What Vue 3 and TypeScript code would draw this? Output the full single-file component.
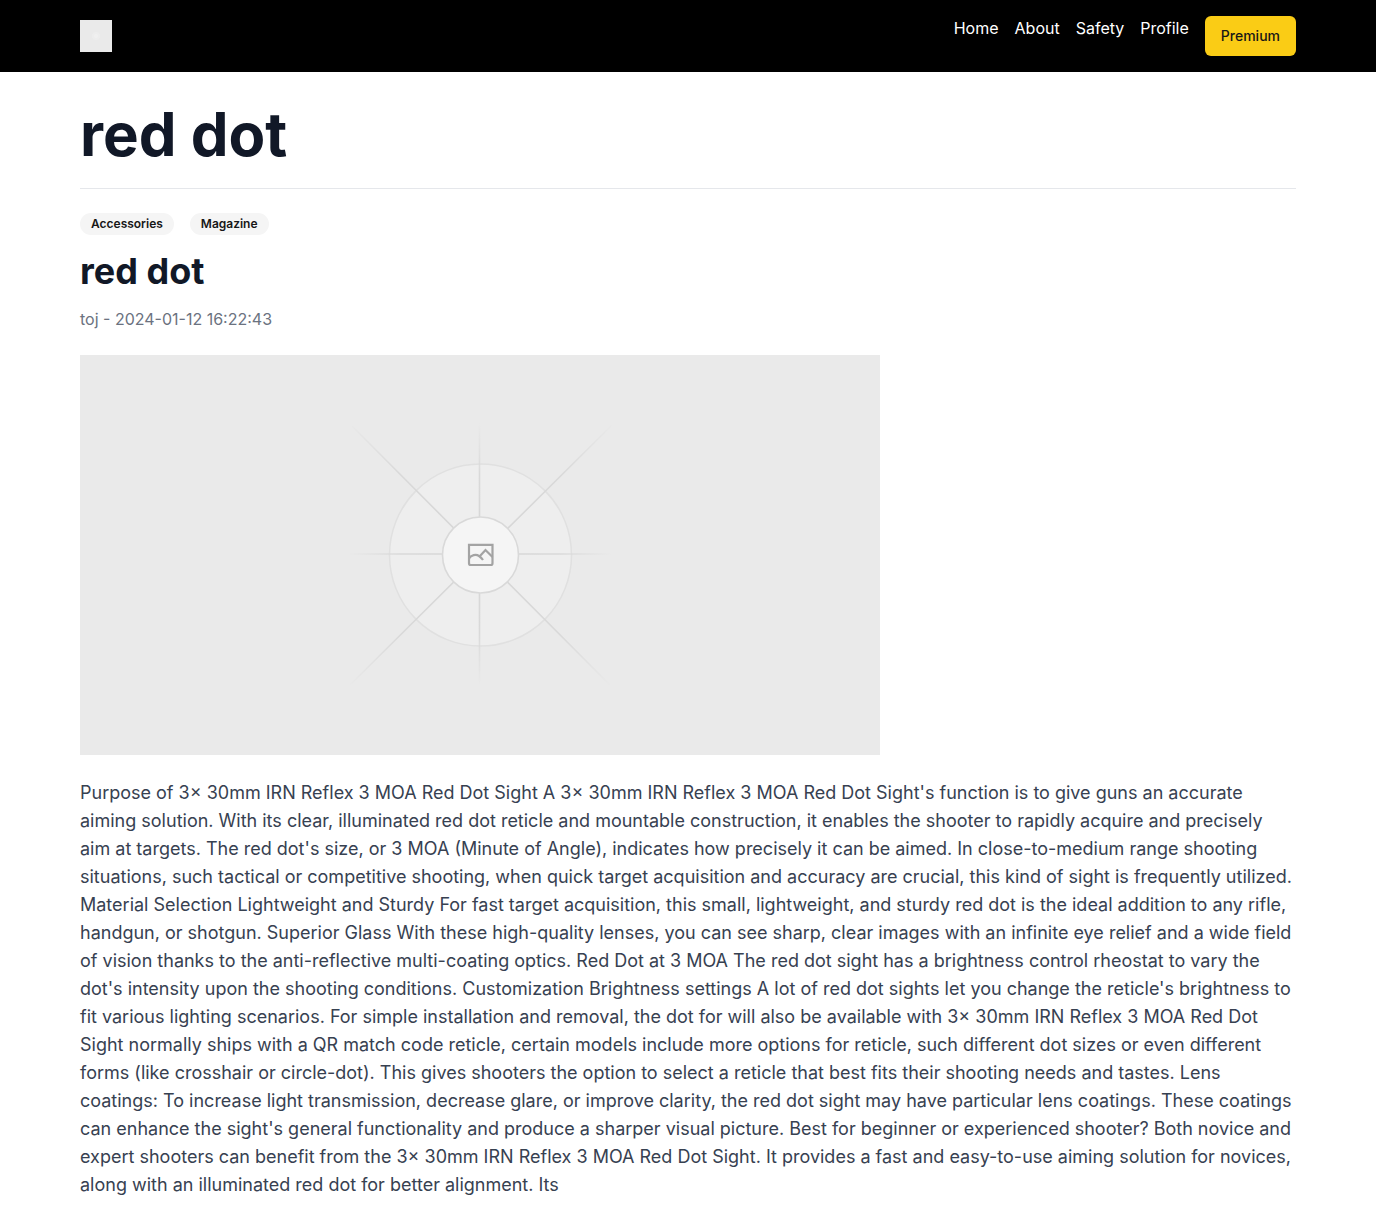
<script setup lang="ts">
interface NavLink {
  label: string
  href: string
}

const links: NavLink[] = [
  { label: 'Home', href: '#home' },
  { label: 'About', href: '#about' },
  { label: 'Safety', href: '#safety' },
  { label: 'Profile', href: '#profile' },
]

const tags: string[] = ['Accessories', 'Magazine']

const post = {
  title: 'red dot',
  author: 'toj',
  date: '2024-01-12 16:22:43',
  body: `Purpose of 3× 30mm IRN Reflex 3 MOA Red Dot Sight A 3× 30mm IRN Reflex 3 MOA Red Dot Sight's function is to give guns an accurate aiming solution. With its clear, illuminated red dot reticle and mountable construction, it enables the shooter to rapidly acquire and precisely aim at targets. The red dot's size, or 3 MOA (Minute of Angle), indicates how precisely it can be aimed. In close-to-medium range shooting situations, such tactical or competitive shooting, when quick target acquisition and accuracy are crucial, this kind of sight is frequently utilized. Material Selection Lightweight and Sturdy For fast target acquisition, this small, lightweight, and sturdy red dot is the ideal addition to any rifle, handgun, or shotgun. Superior Glass With these high-quality lenses, you can see sharp, clear images with an infinite eye relief and a wide field of vision thanks to the anti-reflective multi-coating optics. Red Dot at 3 MOA The red dot sight has a brightness control rheostat to vary the dot's intensity upon the shooting conditions. Customization Brightness settings A lot of red dot sights let you change the reticle's brightness to fit various lighting scenarios. For simple installation and removal, the dot for will also be available with 3× 30mm IRN Reflex 3 MOA Red Dot Sight normally ships with a QR match code reticle, certain models include more options for reticle, such different dot sizes or even different forms (like crosshair or circle-dot). This gives shooters the option to select a reticle that best fits their shooting needs and tastes. Lens coatings: To increase light transmission, decrease glare, or improve clarity, the red dot sight may have particular lens coatings. These coatings can enhance the sight's general functionality and produce a sharper visual picture. Best for beginner or experienced shooter? Both novice and expert shooters can benefit from the 3× 30mm IRN Reflex 3 MOA Red Dot Sight. It provides a fast and easy-to-use aiming solution for novices, along with an illuminated red dot for better alignment. Its`,
}
</script>

<template>
  <div class="page">
    <header class="bar">
      <a class="logo" href="#home" aria-label="Home">
        <svg viewBox="0 0 32 32" aria-hidden="true">
          <rect width="32" height="32" fill="#eaeaea" />
          <circle cx="16" cy="16" r="4" fill="#ededed" />
          <circle cx="16" cy="16" r="2" fill="#f0f0f0" />
        </svg>
      </a>
      <nav class="nav">
        <a v-for="link in links" :key="link.label" :href="link.href">{{ link.label }}</a>
        <button type="button" class="premium">Premium</button>
      </nav>
    </header>

    <main class="content">
      <h1>{{ post.title }}</h1>
      <article>
        <ul class="tags">
          <li v-for="tag in tags" :key="tag">{{ tag }}</li>
        </ul>
        <h2>{{ post.title }}</h2>
        <p class="meta">{{ post.author }} - {{ post.date }}</p>
        <svg class="cover" viewBox="0 0 800 400" role="img" aria-label="Image placeholder">
          <defs>
            <radialGradient id="ray" gradientUnits="userSpaceOnUse" cx="400" cy="199" r="132">
              <stop offset="0" stop-color="#d6d6d6" />
              <stop offset="0.6" stop-color="#d9d9d9" />
              <stop offset="1" stop-color="#d9d9d9" stop-opacity="0" />
            </radialGradient>
            <radialGradient id="diagonal" gradientUnits="userSpaceOnUse" cx="400" cy="199" r="188">
              <stop offset="0" stop-color="#d6d6d6" />
              <stop offset="0.6" stop-color="#d9d9d9" />
              <stop offset="1" stop-color="#d9d9d9" stop-opacity="0" />
            </radialGradient>
          </defs>
          <rect width="800" height="400" fill="#eaeaea" />
          <circle cx="400.5" cy="200" r="91" fill="#eeeeee" stroke="#e0e0e0" stroke-width="1.5" />
          <g fill="none" stroke-width="1.6">
            <path d="M399.5 68V331M268 199H532" stroke="url(#ray)" />
            <path d="M272 71 530 330M532 70 270 330" stroke="url(#diagonal)" />
          </g>
          <circle cx="400.5" cy="200" r="38" fill="#f5f5f5" stroke="#d9d9d9" stroke-width="1.6" />
          <g fill="none" stroke="#a3a3a3" stroke-width="2.2">
            <path d="M389 189.8H412.500V208.200Q412.500 210 410.700 210H390.800Q389 210 389 208.200Z" />
            <path d="M389 203.500C391 200 396 199 399 201C400.500 202 402 203.500 403 205M399.500 201.500L405.500 195L412.500 202" />
          </g>
        </svg>
        <p class="body">{{ post.body }}</p>
      </article>
    </main>
  </div>
</template>

<style>
body {
  margin: 0;
  background: #fff;
}
</style>

<style scoped>
.page {
  font-family: Inter, "Liberation Sans", sans-serif;
  font-size: 16px;
  line-height: 24px;
  color: #111827;
}

.bar {
  display: flex;
  align-items: center;
  justify-content: space-between;
  padding: 16px 80px;
  background: #000;
}

.logo svg {
  display: block;
  width: 32px;
  height: 32px;
}

.nav {
  display: flex;
  align-items: flex-start;
  gap: 16px;
}

.nav a {
  color: #fff;
  text-decoration: none;
}

.premium {
  padding: 10px 16px;
  border: 0;
  border-radius: 6px;
  background: #facc15;
  color: #171717;
  font-family: inherit;
  font-size: 14px;
  font-weight: 500;
  line-height: 20px;
  cursor: pointer;
}

.content {
  padding: 32px 80px;
}

h1 {
  margin: 0 0 24px;
  padding-bottom: 24px;
  border-bottom: 1px solid #e5e7eb;
  font-size: 60px;
  font-weight: 700;
  line-height: 60px;
}

.tags {
  display: flex;
  gap: 16px;
  margin: 0 0 16px;
  padding: 0;
  list-style: none;
}

.tags li {
  padding: 3px 11px;
  border-radius: 11px;
  background: #f5f5f5;
  color: #171717;
  font-size: 12px;
  font-weight: 600;
  line-height: 16px;
}

h2 {
  margin: 0 0 16px;
  font-size: 36px;
  font-weight: 700;
  line-height: 40px;
}

.meta {
  margin: 0 0 24px;
  color: #6b7280;
}

.cover {
  display: block;
  width: 100%;
  max-width: 800px;
  margin-bottom: 24px;
}

.body {
  margin: 0;
  color: #374151;
  font-size: 18px;
  line-height: 28px;
}
</style>
